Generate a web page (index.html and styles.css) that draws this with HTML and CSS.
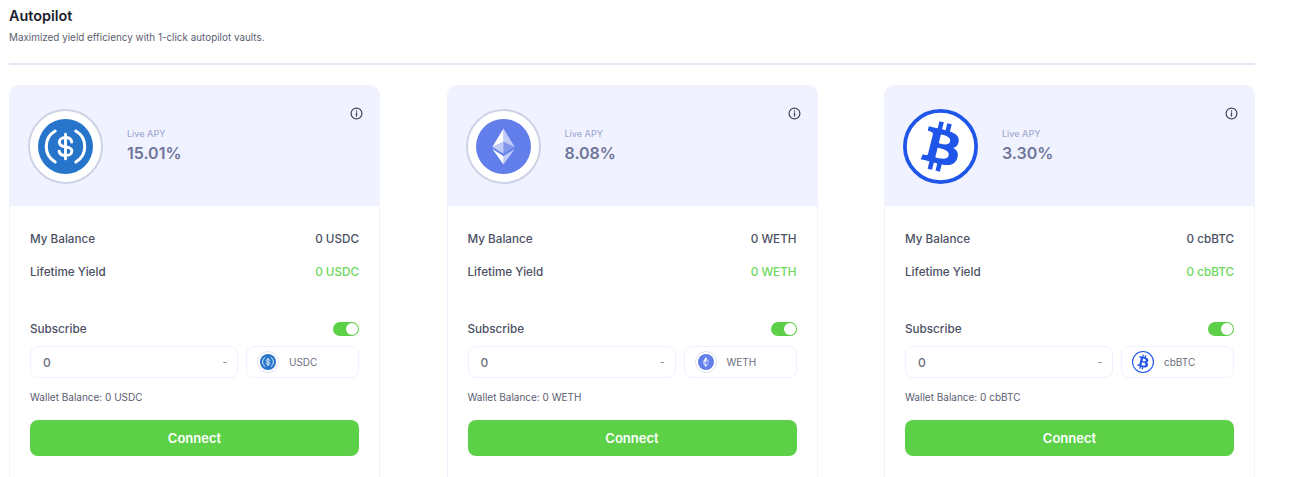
FILE: index.html
```html
<!DOCTYPE html>
<html lang="en">
<head>
    <meta charset="UTF-8">
    <meta name="viewport" content="width=device-width, initial-scale=1.0">
    <title>Autopilot</title>
    <link rel="stylesheet" href="styles.css">
</head>
<body>
    <svg class="sprites" width="0" height="0">
        <symbol id="icon-usdc" viewBox="0 0 32 32">
            <circle cx="16" cy="16" r="16" fill="#2775ca"/>
            <path d="M10 7a10.4 10.4 0 0 0 0 18M22 7a10.4 10.4 0 0 1 0 18" fill="none" stroke="#fff" stroke-width="1.8" stroke-linecap="round"/>
            <path d="M19.6 13.4c-.2-1.6-1.6-2.6-3.6-2.6-2.1 0-3.6 1.1-3.6 2.7 0 3.9 7.3 1.6 7.3 5.1 0 1.7-1.6 2.7-3.7 2.7-2 0-3.4-1-3.7-2.6M16 8.8v14.4" fill="none" stroke="#fff" stroke-width="1.7" stroke-linecap="round"/>
        </symbol>
        <symbol id="icon-eth" viewBox="0 0 32 32">
            <circle cx="16" cy="16" r="16" fill="#627eea"/>
            <polygon points="16,5.5 16,13.3 22.5,16.3" fill="#fff" fill-opacity=".6"/>
            <polygon points="16,5.5 9.5,16.3 16,13.3" fill="#fff"/>
            <polygon points="16,21.5 16,26.5 22.5,17.5" fill="#fff" fill-opacity=".6"/>
            <polygon points="16,26.5 16,21.5 9.5,17.5" fill="#fff"/>
            <polygon points="16,20.2 22.5,16.3 16,13.3" fill="#fff" fill-opacity=".2"/>
            <polygon points="9.5,16.3 16,20.2 16,13.3" fill="#fff" fill-opacity=".6"/>
        </symbol>
        <symbol id="icon-btc" viewBox="0 0 32 32">
            <circle cx="16" cy="16" r="15.2" fill="#fff" stroke="#1f55e8" stroke-width="1.6"/>
            <g transform="translate(16 16) scale(1.08) translate(-16 -16)">
                <path fill="#1f55e8" d="M23.189 14.02c.314-2.096-1.283-3.223-3.465-3.975l.708-2.84-1.728-.43-.69 2.765c-.454-.114-.92-.22-1.385-.326l.695-2.783L15.596 6l-.708 2.839c-.376-.086-.746-.17-1.104-.26l.002-.009-2.384-.595-.46 1.846s1.283.294 1.256.312c.7.175.826.638.805 1.006l-.806 3.235c.048.012.11.03.18.057l-.183-.045-1.13 4.532c-.086.212-.303.531-.793.41.018.025-1.256-.313-1.256-.313l-.858 1.978 2.25.561c.418.105.828.215 1.231.318l-.715 2.872 1.727.43.708-2.84c.472.127.93.245 1.378.357l-.706 2.828 1.728.43.715-2.866c2.948.558 5.164.333 6.097-2.333.752-2.146-.037-3.385-1.588-4.192 1.13-.26 1.98-1.003 2.207-2.538zm-3.95 5.538c-.533 2.147-4.148.986-5.32.695l.95-3.805c1.172.293 4.929.872 4.37 3.11zm.535-5.569c-.487 1.953-3.495.96-4.47.717l.86-3.45c.975.243 4.118.696 3.61 2.733z"/>
            </g>
        </symbol>
        <symbol id="icon-info" viewBox="0 0 12 12">
            <circle cx="6" cy="6" r="5" fill="none" stroke="#3f4356" stroke-width="1.1"/>
            <path d="M6 5.4v3" stroke="#3f4356" stroke-width="1.2" stroke-linecap="round"/>
            <circle cx="6" cy="3.6" r=".7" fill="#3f4356"/>
        </symbol>
    </svg>

    <header class="page-head">
        <h1>Autopilot</h1>
        <p>Maximized yield efficiency with 1-click autopilot vaults.</p>
    </header>

    <main class="vaults">
        <section class="vault">
            <div class="vault-top">
                <span class="logo ringed"><svg><use href="#icon-usdc"/></svg></span>
                <div class="apy">
                    <span class="apy-label">Live APY</span>
                    <span class="apy-value">15.01%</span>
                </div>
                <svg class="info"><use href="#icon-info"/></svg>
            </div>
            <div class="vault-body">
                <div class="row"><span>My Balance</span><span>0 USDC</span></div>
                <div class="row"><span>Lifetime Yield</span><span class="green">0 USDC</span></div>
                <div class="row subscribe"><span>Subscribe</span><span class="toggle"></span></div>
                <div class="inputs">
                    <div class="amount"><span>0</span><span class="dash">-</span></div>
                    <div class="token"><span class="token-logo ringed"><svg><use href="#icon-usdc"/></svg></span><span>USDC</span></div>
                </div>
                <p class="wallet">Wallet Balance: 0 USDC</p>
                <button class="connect">Connect</button>
            </div>
        </section>

        <section class="vault">
            <div class="vault-top">
                <span class="logo ringed"><svg><use href="#icon-eth"/></svg></span>
                <div class="apy">
                    <span class="apy-label">Live APY</span>
                    <span class="apy-value">8.08%</span>
                </div>
                <svg class="info"><use href="#icon-info"/></svg>
            </div>
            <div class="vault-body">
                <div class="row"><span>My Balance</span><span>0 WETH</span></div>
                <div class="row"><span>Lifetime Yield</span><span class="green">0 WETH</span></div>
                <div class="row subscribe"><span>Subscribe</span><span class="toggle"></span></div>
                <div class="inputs">
                    <div class="amount"><span>0</span><span class="dash">-</span></div>
                    <div class="token"><span class="token-logo ringed"><svg><use href="#icon-eth"/></svg></span><span>WETH</span></div>
                </div>
                <p class="wallet">Wallet Balance: 0 WETH</p>
                <button class="connect">Connect</button>
            </div>
        </section>

        <section class="vault">
            <div class="vault-top">
                <span class="logo"><svg><use href="#icon-btc"/></svg></span>
                <div class="apy">
                    <span class="apy-label">Live APY</span>
                    <span class="apy-value">3.30%</span>
                </div>
                <svg class="info"><use href="#icon-info"/></svg>
            </div>
            <div class="vault-body">
                <div class="row"><span>My Balance</span><span>0 cbBTC</span></div>
                <div class="row"><span>Lifetime Yield</span><span class="green">0 cbBTC</span></div>
                <div class="row subscribe"><span>Subscribe</span><span class="toggle"></span></div>
                <div class="inputs">
                    <div class="amount"><span>0</span><span class="dash">-</span></div>
                    <div class="token"><span class="token-logo"><svg><use href="#icon-btc"/></svg></span><span>cbBTC</span></div>
                </div>
                <p class="wallet">Wallet Balance: 0 cbBTC</p>
                <button class="connect">Connect</button>
            </div>
        </section>
    </main>
</body>
</html>
```

FILE: styles.css
```css
html {
    height: 100%;
    overflow: hidden;
}

body {
    margin: 0;
    padding: 7px 37px 0 9px;
    background-color: white;
    color: #4b4f63;
    font-family: 'Inter', sans-serif;
}

.sprites {
    display: block;
    height: 0;
}

.page-head {
    height: 56px;
    border-bottom: 2px solid #e6e7f5;
    margin-bottom: 20px;
}

.page-head h1 {
    margin: 0;
    font-size: 14.4px;
    line-height: 17px;
    font-weight: 600;
    color: #1b1d2e;
}

.page-head p {
    margin: 6px 0 0;
    font-size: 9.9px;
    line-height: 14px;
    color: #5a5e72;
}

.vaults {
    display: grid;
    grid-template-columns: repeat(3, 371px);
    justify-content: space-between;
}

.vault {
    border-radius: 10px;
    overflow: hidden;
}

.vault-top {
    display: flex;
    align-items: center;
    box-sizing: border-box;
    height: 121px;
    padding: 1px 17px 0 19px;
    background-color: #f0f3ff;
}

.logo {
    display: flex;
    flex: none;
    align-items: center;
    justify-content: center;
    box-sizing: border-box;
    width: 75px;
    height: 75px;
    border-radius: 50%;
    background-color: white;
}

.logo svg {
    width: 75px;
    height: 75px;
}

.logo.ringed {
    border: 2px solid #cdd3e6;
}

.logo.ringed svg {
    width: 55px;
    height: 55px;
}

.apy {
    display: flex;
    flex-direction: column;
    gap: 3px;
    margin-left: 24px;
}

.apy-label {
    font-size: 9px;
    line-height: 12px;
    font-weight: 500;
    color: #a4aad2;
}

.apy-value {
    font-size: 16px;
    line-height: 21px;
    font-weight: 600;
    color: #6f7599;
}

.info {
    width: 13px;
    height: 13px;
    margin: -66px 0 0 auto;
}

.vault-body {
    height: 300px;
    padding: 25px 20px 0;
    border: 1px solid #f0f3ff;
    border-top: none;
}

.row {
    display: flex;
    justify-content: space-between;
    align-items: center;
    height: 15px;
    margin-bottom: 18px;
    font-size: 11.7px;
    font-weight: 500;
}

.green {
    color: #6bd85a;
}

.row.subscribe {
    margin: 42px 0 10px;
}

.toggle {
    display: flex;
    justify-content: flex-end;
    box-sizing: border-box;
    width: 26px;
    height: 14px;
    padding: 1px;
    border-radius: 7px;
    background-color: #5cd147;
}

.toggle::after {
    content: "";
    width: 12px;
    height: 12px;
    border-radius: 50%;
    background-color: white;
}

.inputs {
    display: flex;
    gap: 8px;
}

.amount,
.token {
    display: flex;
    align-items: center;
    box-sizing: border-box;
    height: 32px;
    border: 1px solid #eef1ff;
    border-radius: 8px;
}

.amount {
    flex: 1;
    justify-content: space-between;
    padding: 0 10px 0 12px;
    font-size: 12px;
    font-weight: 500;
    color: #6c6f7e;
}

.dash {
    font-size: 10px;
    color: #8a8d9c;
}

.token {
    gap: 10px;
    width: 113px;
    padding-left: 10px;
    font-size: 10px;
    color: #6c6f7e;
}

.token-logo {
    display: flex;
    align-items: center;
    justify-content: center;
    box-sizing: border-box;
    width: 22px;
    height: 22px;
    border-radius: 50%;
}

.token-logo svg {
    width: 22px;
    height: 22px;
}

.token-logo.ringed {
    border: 1px solid #dfe3f0;
}

.token-logo.ringed svg {
    width: 16px;
    height: 16px;
}

.wallet {
    margin: 12px 0 0;
    font-size: 10px;
    line-height: 14px;
    color: #5a5e72;
}

.connect {
    display: block;
    width: 100%;
    height: 36px;
    margin-top: 16px;
    border: none;
    border-radius: 8px;
    background-color: #5cd147;
    color: white;
    font-family: 'Inter', sans-serif;
    font-size: 13px;
    font-weight: 600;
}
```
